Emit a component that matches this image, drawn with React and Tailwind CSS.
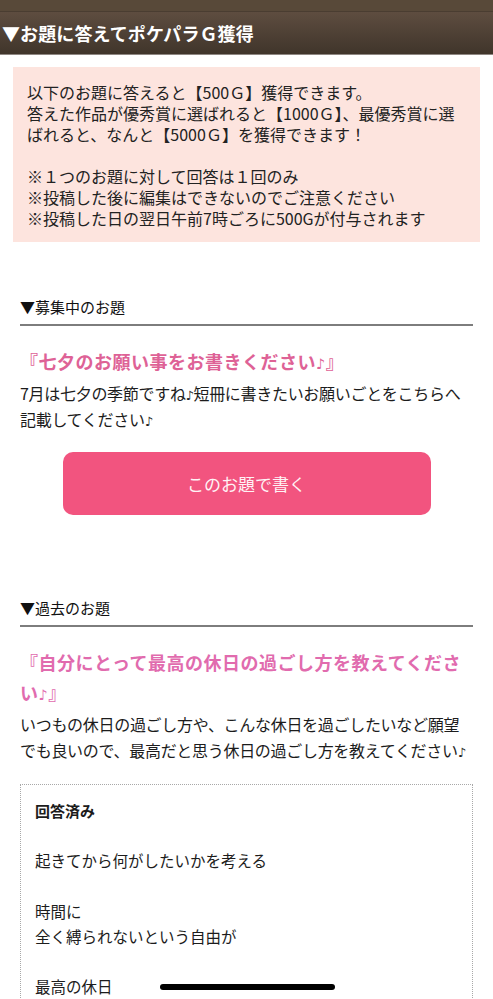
import React from 'react';

// ♪ は全角にならないよう欧文フォントで表示
const Note = () => (
  <span className="font-[family-name:'DejaVu_Sans','Liberation_Sans',sans-serif] text-[0.8em] leading-[0]">♪</span>
);

// お題セクション (募集中 / 過去)
const SectionHeading = ({ children }) => (
  <div className="border-b-2 border-[#7d7d7d] pb-[7px] text-[15px] leading-[20px] text-[#111]">
    ▼{children}
  </div>
);

const Topic = ({ title, body, titleColor }) => (
  <div>
    <h3 className={`mt-[20px] text-[18px] leading-[30px] font-bold tracking-[0.5px] ${titleColor}`}>
      {title}
    </h3>
    <p className="mt-[4px] text-[16px] leading-[26px] tracking-[-0.3px] text-[#1c1c1c]">{body}</p>
  </div>
);

const answerLines = [
  '起きてから何がしたいかを考える',
  '',
  '時間に',
  '全く縛られないという自由が',
  '',
  '最高の休日',
  '',
  'のんびりコーヒーを飲みながら',
  '好きな音楽を聴いて過ごす',
];

export default function App() {
  return (
    <div className="relative min-h-screen bg-white font-[family-name:'Noto_Sans_CJK_JP','Noto_Sans',sans-serif]">
      {/* 上部バー（途切れたナビ） */}
      <div className="h-[12px] bg-[#584939] border-b border-[#4a3d31]" />

      {/* 見出し */}
      <div className="flex h-[43px] items-center bg-gradient-to-b from-[#5e4d40] to-[#40352b] border-b border-[#8f8782] pl-[2px]">
        <h2 className="text-[18px] font-bold tracking-[0.1px] text-white">▼お題に答えてポケパラＧ獲得</h2>
      </div>

      {/* 説明ボックス */}
      <div className="mx-[13px] mt-[12px] bg-[#fde4de] px-[14px] pt-[15px] pb-[13px] text-[16px] leading-[21px] text-[#222]">
        <p>以下のお題に答えると【500Ｇ】獲得できます。</p>
        <p>答えた作品が優秀賞に選ばれると【1000Ｇ】、最優秀賞に選ばれると、なんと【5000Ｇ】を獲得できます！</p>
        <p>&nbsp;</p>
        <p>※１つのお題に対して回答は１回のみ</p>
        <p>※投稿した後に編集はできないのでご注意ください</p>
        <p>※投稿した日の翌日午前7時ごろに500Gが付与されます</p>
      </div>

      {/* 募集中のお題 */}
      <section className="mt-[55px] px-5">
        <SectionHeading>募集中のお題</SectionHeading>
        <Topic
          title={<>『七夕のお願い事をお書きください<Note />』</>}
          body={<>7月は七夕の季節ですね<Note />短冊に書きたいお願いごとをこちらへ記載してください<Note /></>}
          titleColor="text-[#de6296]"
        />
        <div className="mt-[20px] flex justify-center">
          <button className="h-[63px] w-[368px] rounded-[10px] bg-[#f2547f] text-[17px] text-[#fff2f5]">
            このお題で書く
          </button>
        </div>
      </section>

      {/* 過去のお題 */}
      <section className="mt-[83px] px-5 pb-16">
        <SectionHeading>過去のお題</SectionHeading>
        <Topic
          title={<>『自分にとって最高の休日の過ごし方を教えてください<Note />』</>}
          body={<>いつもの休日の過ごし方や、こんな休日を過ごしたいなど願望でも良いので、最高だと思う休日の過ごし方を教えてください<Note /></>}
          titleColor="text-[#e16bae]"
        />

        <div className="mt-[21px] border border-dotted border-[#a8a8a8] px-[14px] pt-[13px] pb-4 text-[15.5px] leading-[25.2px] text-[#1c1c1c]">
          <p className="text-[15px] font-bold">回答済み</p>
          <p>&nbsp;</p>
          {answerLines.map((line, i) => (
            <p key={i}>{line || '\u00a0'}</p>
          ))}
        </div>
      </section>

      {/* ホームインジケーター */}
      <div className="fixed bottom-[9px] left-[160px] h-[6px] w-[175px] rounded-full bg-black" />
    </div>
  );
}
